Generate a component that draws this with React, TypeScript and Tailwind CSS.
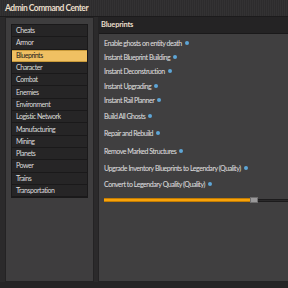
import React from "react";

const categories = [
  "Cheats",
  "Armor",
  "Blueprints",
  "Character",
  "Combat",
  "Enemies",
  "Environment",
  "Logistic Network",
  "Manufacturing",
  "Mining",
  "Planets",
  "Power",
  "Trains",
  "Transportation",
];

// margin above each row, so the rows sit where the reference has them
const options: { label: string; mt: string }[] = [
  { label: "Enable ghosts on entity death", mt: "mt-[5px]" },
  { label: "Instant Blueprint Building", mt: "mt-[6px]" },
  { label: "Instant Deconstruction", mt: "mt-[6px]" },
  { label: "Instant Upgrading", mt: "mt-[7px]" },
  { label: "Instant Rail Planner", mt: "mt-[6px]" },
  { label: "Build All Ghosts", mt: "mt-[8px]" },
  { label: "Repair and Rebuild", mt: "mt-[9px]" },
  { label: "Remove Marked Structures", mt: "mt-[10px]" },
  { label: "Upgrade Inventory Blueprints to Legendary (Quality)", mt: "mt-[9px]" },
  { label: "Convert to Legendary Quality (Quality)", mt: "mt-[8px]" },
];

function Info() {
  return <span className="ml-[3px] inline-block w-[4px] h-[4px] rounded-full bg-[#5ea6d6]" />;
}

export default function App() {
  return (
    <div
      className="w-[288px] h-[288px] bg-[#252425] flex flex-col overflow-hidden text-[#e2e2e2] font-normal"
      style={{ fontFamily: "Lato, 'Open Sans', sans-serif" }}
    >
      {/* Title bar */}
      <div className="h-[17px] shrink-0 flex items-center pl-[5px] bg-[repeating-linear-gradient(90deg,#333233_0px,#333233_1px,#2d2c2d_1px,#2d2c2d_2px)] border-b border-[#1c1b1c]">
        <span className="text-[8.5px] font-bold tracking-[-0.5px] text-[#eadfca] leading-none">Admin Command Center</span>
      </div>

      <div className="h-[265px] shrink-0 flex gap-[4px] pl-[5px] bg-[#2b2a2b]">
        {/* Left panel */}
        <div className="w-[89px] shrink-0 bg-[#3e3d3e] border border-[#242324] px-[5px] pt-[6px] flex flex-col">
          <div className="bg-[#1f1e1f] border border-[#1a191a] flex flex-col">
            {categories.map((c) => (
              <div
                key={c}
                className={
                  c === "Blueprints"
                    ? "h-[12.3px] flex items-center pl-[4px] text-[7px] tracking-[-0.45px] leading-none bg-[#f0c062] text-[#1c1b1c] border-y border-[#c99a3a]"
                    : "h-[12.3px] flex items-center pl-[4px] text-[7px] tracking-[-0.45px] leading-none bg-[#262526] text-[#dcdcdc] border-b border-[#1a191a]"
                }
              >
                {c}
              </div>
            ))}
          </div>
        </div>

        {/* Right panel */}
        <div className="flex-1 flex flex-col bg-[#403f40] border border-[#242324] border-r-0 border-t-0">
          <div className="h-[17px] shrink-0 flex items-center pl-[2px] bg-[#242324] border-b border-[#1a191a]">
            <span className="text-[7.5px] font-bold tracking-[-0.2px] text-[#eadfca] leading-none">Blueprints</span>
          </div>
          <div className="flex flex-col pl-[5px]">
            {options.map((o) => (
              <div
                key={o.label}
                className={o.mt + " h-[8px] flex items-center text-[7px] tracking-[-0.45px] leading-none text-[#e0e0e0] whitespace-nowrap"}
              >
                {o.label}
                <Info />
              </div>
            ))}
            <div className="flex items-center h-[8px] mt-[8px]">
              <div className="w-[146px] h-[4px] bg-[#f7a20a] border-y border-[#c27c04]" />
              <div className="w-[8px] h-[6px] bg-[#9a999a] border border-[#6e6d6e]" />
              <div className="flex-1 h-[3px] bg-[#2a292a] border-y border-[#1c1b1c]" />
            </div>
          </div>
        </div>
      </div>
    </div>
  );
}
